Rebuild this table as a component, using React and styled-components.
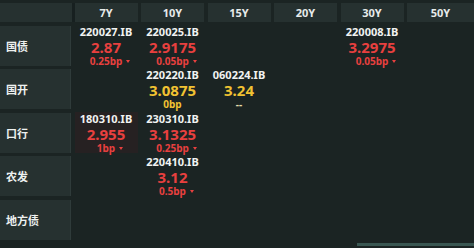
import React from 'react'
import styled, { createGlobalStyle } from 'styled-components'

const GlobalStyle = createGlobalStyle`
  html, body {
    margin: 0;
    padding: 0;
    background: #1b2423;
    overflow: hidden;
  }
  body {
    font-family: 'Noto Sans', 'Noto Sans CJK SC', sans-serif;
  }
`

const TENORS = ['7Y', '10Y', '15Y', '20Y', '30Y', '50Y']

const ROWS = [
  {
    label: '国债',
    cells: {
      '7Y': { code: '220027.IB', value: '2.87', change: '0.25bp', tone: 'down' },
      '10Y': { code: '220025.IB', value: '2.9175', change: '0.05bp', tone: 'down' },
      '30Y': { code: '220008.IB', value: '3.2975', change: '0.05bp', tone: 'down' },
    },
  },
  {
    label: '国开',
    cells: {
      '10Y': { code: '220220.IB', value: '3.0875', change: '0bp', tone: 'flat' },
      '15Y': { code: '060224.IB', value: '3.24', change: '--', tone: 'none' },
    },
  },
  {
    label: '口行',
    cells: {
      '7Y': { code: '180310.IB', value: '2.955', change: '1bp', tone: 'down', active: true },
      '10Y': { code: '230310.IB', value: '3.1325', change: '0.25bp', tone: 'down' },
    },
  },
  {
    label: '农发',
    cells: {
      '10Y': { code: '220410.IB', value: '3.12', change: '0.5bp', tone: 'down' },
    },
  },
  { label: '地方债', cells: {} },
]

const TONE = {
  down: '#e8403f',
  flat: '#f1c232',
  none: '#f1c232',
}

const Page = styled.div`
  width: 474px;
  height: 248px;
  padding-top: 3px;
  box-sizing: border-box;
  display: flex;
  flex-direction: column;
  overflow: hidden;
`

const Grid = styled.div`
  display: grid;
  grid-template-columns: 71px repeat(5, 63px) 67px;
  grid-template-rows: 19px repeat(5, 40px);
  column-gap: 3.5px;
  row-gap: 3.6px;
`

const Corner = styled.div`
  background: #263130;
  margin-right: -3.5px;
  border-right: 3px solid #172020;
`

const HeadCell = styled.div`
  background: #263130;
  color: #e6ebea;
  font-size: 11px;
  font-weight: 700;
  display: flex;
  align-items: center;
  justify-content: center;
`

const Label = styled.div`
  background: #263130;
  border-right: 1px solid #2f3b3a;
  color: #eef1f0;
  font-size: 11px;
  font-weight: 700;
  display: flex;
  align-items: center;
  padding-left: 6px;
`

const Cell = styled.div`
  display: flex;
  flex-direction: column;
  align-items: center;
  background: ${(p) => (p.$active ? '#262122' : 'transparent')};
  margin-top: -1px;
`

const Code = styled.div`
  color: #f0f2f1;
  font-size: 11px;
  font-weight: 700;
  line-height: 13px;
`

const Value = styled.div`
  color: ${(p) => TONE[p.$tone]};
  font-size: 15px;
  font-weight: 700;
  line-height: 16px;
  margin-top: 1px;
`

const Change = styled.span`
  position: relative;
  color: ${(p) => (p.$tone === 'none' ? '#e4dcb0' : TONE[p.$tone])};
  font-size: 10px;
  font-weight: 700;
  line-height: 13px;

  ${(p) =>
    p.$tone === 'down' &&
    `
    &::after {
      content: '';
      position: absolute;
      left: calc(100% + 4px);
      top: 5px;
      border-left: 2.5px solid transparent;
      border-right: 2.5px solid transparent;
      border-top: 3px solid ${TONE.down};
    }
  `}
`

const Track = styled.div`
  margin-top: auto;
  margin-bottom: 2px;
  display: flex;
  justify-content: flex-end;
`

const Thumb = styled.div`
  width: 117px;
  height: 3px;
  background: #3a5752;
`

const QuoteCell = ({ quote }) => {
  if (!quote) return <div />
  return (
    <Cell $active={quote.active}>
      <Code>{quote.code}</Code>
      <Value $tone={quote.tone}>{quote.value}</Value>
      <Change $tone={quote.tone}>{quote.change}</Change>
    </Cell>
  )
}

const App = () => (
  <Page>
    <GlobalStyle />
    <Grid>
      <Corner />
      {TENORS.map((t) => (
        <HeadCell key={t}>{t}</HeadCell>
      ))}
      {ROWS.map((row) => (
        <React.Fragment key={row.label}>
          <Label>{row.label}</Label>
          {TENORS.map((t) => (
            <QuoteCell key={t} quote={row.cells[t]} />
          ))}
        </React.Fragment>
      ))}
    </Grid>
    <Track>
      <Thumb />
    </Track>
  </Page>
)

export default App
